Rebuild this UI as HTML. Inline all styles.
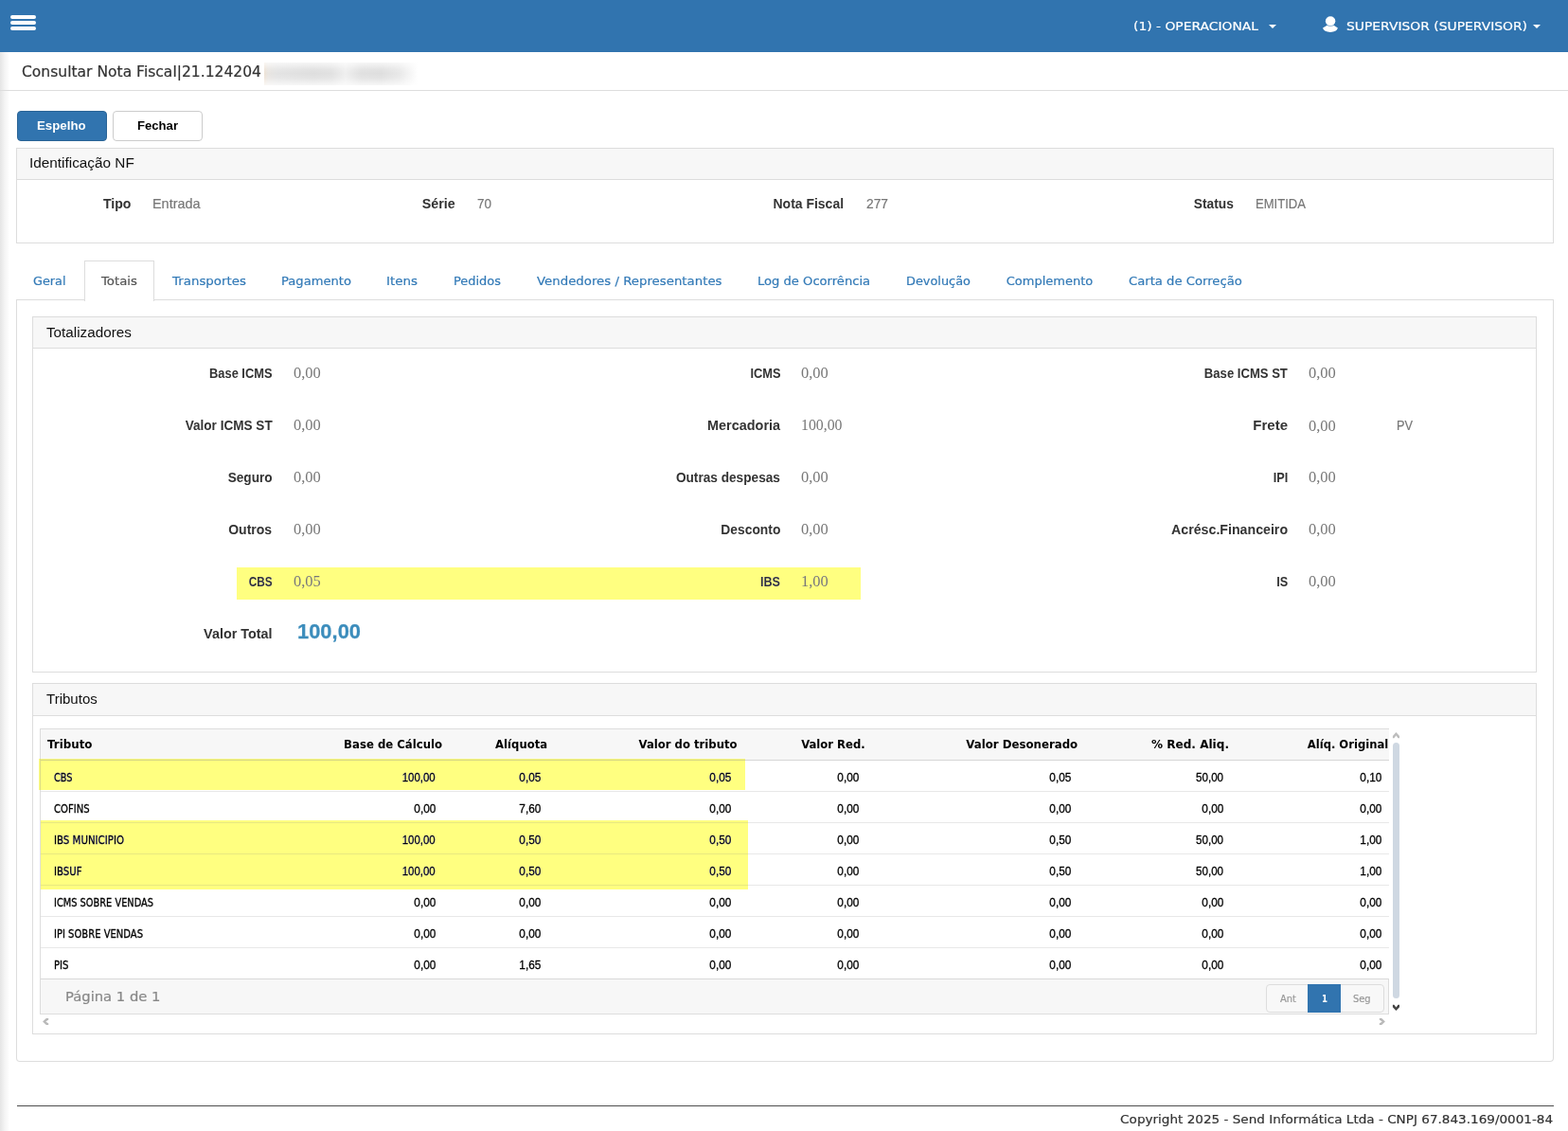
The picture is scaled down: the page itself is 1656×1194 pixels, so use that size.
<!DOCTYPE html>
<html lang="pt-BR">
<head>
<meta charset="utf-8">
<title>Consultar Nota Fiscal</title>
<style>
*{box-sizing:border-box}
html,body{margin:0;padding:0}
body{width:1656px;height:1194px;position:relative;overflow:hidden;background:#fff;color:#333;font:13px/20px 'DejaVu Sans',Verdana,sans-serif}
ul,li,h1,h2,p,hr,label,mark,button{margin:0;padding:0;border:0;list-style:none;background:none;font:inherit;color:inherit}
a{text-decoration:none}
/* positioned text: every label is placed by its baseline; scaleX matches the reference glyph widths */
.t{position:absolute;white-space:pre;transform-origin:0 50%}
.t.r{transform-origin:100% 50%}
.f-nav{font:normal 13px/20px 'DejaVu Sans', Verdana, sans-serif}
.f-title{font:normal 15px/20px 'DejaVu Sans', Verdana, sans-serif}
.f-tab{font:normal 13px/20px 'DejaVu Sans', Verdana, sans-serif}
.f-foot{font:normal 13px/20px 'DejaVu Sans', Verdana, sans-serif}
.f-pg{font:normal 14px/20px 'DejaVu Sans', Verdana, sans-serif}
.f-pag{font:normal 9.7px/20px 'DejaVu Sans', Verdana, sans-serif}
.f-pagb{font:bold 9.7px/20px 'DejaVu Sans', Verdana, sans-serif}
.f-th{font:bold 12.5px/20px 'DejaVu Sans', Verdana, sans-serif}
.f-ph{font:normal 15.5px/20px 'Liberation Sans', Arial, sans-serif}
.f-btn{font:bold 13px/20px 'Liberation Sans', Arial, sans-serif}
.f-lbl{font:bold 15px/20px 'Liberation Sans', Arial, sans-serif}
.f-val{font:normal 15px/20px 'Liberation Sans', Arial, sans-serif}
.f-td{font:normal 12px/20px 'Liberation Sans', Arial, sans-serif}
.f-tdn{font:normal 12px/20px 'DejaVu Sans Condensed', 'DejaVu Sans', 'Trebuchet MS', sans-serif}
.f-ser{font:normal 16px/20px 'Liberation Serif', 'Times New Roman', serif}
.f-tot{font:bold 22px/20px 'Liberation Sans', Arial, sans-serif}
.f-td,.f-tdn{-webkit-text-stroke:.3px currentColor}
.f-tot{-webkit-text-stroke:.25px currentColor}
.f-tab,.f-nav,.f-title,.f-foot,.f-pg,.f-pag,.f-val{-webkit-text-stroke:.2px currentColor}
/* navbar */
.navbar{position:absolute;background:#3174af}
.menu-toggle{position:absolute;display:block;cursor:pointer}
.menu-toggle .bar{position:absolute;display:block;background:#fff;border-radius:2.2px}
.caret{position:absolute;width:0!important;height:0!important;border-left:4px solid transparent;border-right:4px solid transparent;border-top:4px solid #fff}
.user-icon{position:absolute}
.side-shadow{position:absolute;background:linear-gradient(to right,#e5e5e5 0,#f4f4f4 5px,#fff 10px)}
/* header */
.rule{position:absolute;background:#ddd}
.rule.dark{background:#4d4d4d}
.redacted{position:absolute;background:
 linear-gradient(to bottom,rgba(255,255,255,.72) 0,rgba(255,255,255,.15) 30%,rgba(255,255,255,0) 48%,rgba(255,255,255,.15) 68%,rgba(255,255,255,.75) 100%),
 linear-gradient(to right,#eee2d5 0,#e8e5e1 4px,#e3e3e3 14px,#dedede 32%,#e1e1e1 44%,#efefef 53%,#e0e0e0 63%,#dedede 76%,#e8e8e8 88%,#f7f7f7 96%,#fff 100%)}
.btn{position:absolute;display:block;border:1px solid #ccc;border-radius:4px;background:#fff;cursor:pointer}
.btn-primary{background:#3174af;border-color:#2a6496}
/* panels */
.panel{position:absolute;border:1px solid #ddd;background:#fff}
.panel-heading{display:block;background:#f7f7f7;border-bottom:1px solid #ddd}
/* tabs */
.nav-tabs{position:absolute;border-bottom:1px solid #ddd}
.nav-tabs .active{position:absolute;border:1px solid #ddd;border-bottom:0;background:#fff}
.tab-content{position:absolute;border:1px solid #ddd;border-top:0;border-radius:0 0 4px 4px}
/* annotation highlights */
.hl{position:absolute;display:block;background:#ffff80;mix-blend-mode:darken}
/* data grid */
.grid{position:absolute;border:1px solid #ddd;border-right:0;overflow:hidden;background:#fff}
.table{position:absolute;left:0;top:0;width:1431px;table-layout:fixed;border-collapse:separate;border-spacing:0}
.table th{height:33px;padding:6px 8px;background:#f7f7f7;border-bottom:1px solid #d6d6d6;text-align:right;vertical-align:top;color:#000;white-space:nowrap;font:bold 12.5px/20px 'DejaVu Sans', Verdana, sans-serif}
.table th:first-child{text-align:left;padding-left:6.8px}
.table th:nth-child(3){padding-right:7.5px}
.table th:nth-child(4){padding-right:8.5px}
.table td{height:33px;padding:8px 14.3px 4px;border-bottom:1px solid #e8e8e8;text-align:right;vertical-align:top;color:#000;white-space:nowrap;font:normal 12px/20px 'Liberation Sans', Arial, sans-serif;-webkit-text-stroke:.3px currentColor}
.table td:first-child{text-align:left;padding-left:13.7px;font-family:'DejaVu Sans Condensed', 'DejaVu Sans', 'Trebuchet MS', sans-serif}
.table td:nth-child(2){padding-right:15px}
.table td:nth-child(4){padding-right:15px}
.table td:nth-child(6){padding-right:14.5px}
.table td:nth-child(7){padding-right:14px}
.table tr:last-child td{border-bottom:0}
.sx{display:inline-block;transform-origin:100% 50%}
.sx.l{transform-origin:0 50%}
.grid-footer{position:absolute;background:#f7f7f7;border-top:1px solid #d9d9d9;border-right:1px solid #ddd}
.pagination{position:absolute;border:1px solid #ddd;border-radius:4px;background:#f8f8f8}
.pagination .active{position:absolute;background:#3174af}
.scroll-thumb{position:absolute;border-radius:3.5px;background:#cfd8e2}
.chevrons{position:absolute;overflow:visible}
</style>
</head>
<body>
<nav class="navbar" style="left:0px;top:0px;width:1656px;height:55px;">
  <button class="menu-toggle" style="left:11px;top:15px;width:27px;height:18px;" type="button" aria-label="Menu">
    <span class="bar" style="left:0px;top:0.5px;width:27px;height:4.4px;"></span>
    <span class="bar" style="left:0px;top:6.8px;width:27px;height:4.4px;"></span>
    <span class="bar" style="left:0px;top:13.1px;width:27px;height:4.4px;"></span>
  </button>
  <ul class="nav-right">
    <li class="dropdown">
      <a class="t f-nav" style="left:1197px;top:18px;color:#fff;transform:scaleX(1.0659)">(1) - OPERACIONAL</a>
      <b class="caret" style="left:1340px;top:26px;width:0px;height:0px;"></b>
    </li>
    <li class="dropdown">
      <svg class="user-icon" style="left:1390px;top:10px" width="36" height="30" viewBox="0 0 36 30" aria-hidden="true"><ellipse cx="15.1" cy="12.2" rx="5.2" ry="4.9" fill="#fff"/><rect x="11.4" y="16.3" width="7.4" height="1.6" fill="#fff" opacity=".55"/><path d="M7 19.6 L11.2 16.9 Q15.1 18.9 19 16.9 L22.9 19.6 Q21.6 23.9 15 23.9 Q8.4 23.9 7 19.6 Z" fill="#fff"/></svg>
      <a class="t f-nav" style="left:1421.6px;top:18px;color:#fff;transform:scaleX(1.0667)">SUPERVISOR (SUPERVISOR)</a>
      <b class="caret" style="left:1619px;top:26px;width:0px;height:0px;"></b>
    </li>
  </ul>
</nav>
<aside class="side-shadow" style="left:0px;top:55px;width:10px;height:1139px;" aria-hidden="true"></aside>
<main class="content">
  <header class="page-header">
    <h1 class="t f-title" style="left:23px;top:66px;color:#333;transform:scaleX(1.0360)">Consultar Nota Fiscal|21.124204</h1>
    <span class="redacted" style="left:279px;top:66px;width:162px;height:24px;" aria-hidden="true"></span>
    <hr class="rule" style="left:0px;top:95px;width:1656px;height:1px;">
  </header>
  <div class="toolbar">
    <button class="btn btn-primary" style="left:18px;top:117px;width:95px;height:32px;" type="button">
      <span class="t f-btn" style="left:20.2px;top:5px;color:#fff;transform:scaleX(1.0202)">Espelho</span>
    </button>
    <button class="btn btn-default" style="left:119px;top:117px;width:95px;height:32px;" type="button">
      <span class="t f-btn" style="left:25px;top:5px;color:#000;transform:scaleX(1.0084)">Fechar</span>
    </button>
  </div>
  <section class="panel" style="left:17px;top:156px;width:1624px;height:101px;">
    <h2 class="panel-heading" style="height:33px">
      <span class="t f-ph" style="left:13.2px;top:5px;color:#111;transform:scaleX(0.9893)">Identificação NF</span>
    </h2>
    <div class="panel-body">
      <div class="field">
        <label class="t f-lbl r" style="right:1501.5px;top:48px;color:#333;transform:scaleX(0.9398)">Tipo</label>
        <span class="t f-val" style="left:143.4px;top:48px;color:#777;transform:scaleX(0.9610)">Entrada</span>
      </div>
      <div class="field">
        <label class="t f-lbl r" style="right:1159px;top:48px;color:#333;transform:scaleX(0.9536)">Série</label>
        <span class="t f-val" style="left:486px;top:48px;color:#777;transform:scaleX(0.8989)">70</span>
      </div>
      <div class="field">
        <label class="t f-lbl r" style="right:748.5px;top:48px;color:#333;transform:scaleX(0.9309)">Nota Fiscal</label>
        <span class="t f-val" style="left:897px;top:48px;color:#777;transform:scaleX(0.9189)">277</span>
      </div>
      <div class="field">
        <label class="t f-lbl r" style="right:337.5px;top:48px;color:#333;transform:scaleX(0.9162)">Status</label>
        <span class="t f-val" style="left:1308px;top:48px;color:#777;transform:scaleX(0.8711)">EMITIDA</span>
      </div>
    </div>
  </section>
  <ul class="nav-tabs" style="left:17px;top:275px;width:1624px;height:42px;">
    <li>
      <a class="t f-tab" style="left:17.75px;top:12px;color:#337ab7;transform:scaleX(0.9857)">Geral</a>
    </li>
    <li class="active" style="left:72px;top:0px;width:74px;height:43px;">
      <a class="t f-tab" style="left:17px;top:11px;color:#555;transform:scaleX(1.0231)">Totais</a>
    </li>
    <li>
      <a class="t f-tab" style="left:165px;top:12px;color:#337ab7;transform:scaleX(1.0293)">Transportes</a>
    </li>
    <li>
      <a class="t f-tab" style="left:280px;top:12px;color:#337ab7;transform:scaleX(1.0081)">Pagamento</a>
    </li>
    <li>
      <a class="t f-tab" style="left:391.25px;top:12px;color:#337ab7;transform:scaleX(1.0328)">Itens</a>
    </li>
    <li>
      <a class="t f-tab" style="left:462.25px;top:12px;color:#337ab7;transform:scaleX(0.9956)">Pedidos</a>
    </li>
    <li>
      <a class="t f-tab" style="left:549.75px;top:12px;color:#337ab7;transform:scaleX(1.0236)">Vendedores / Representantes</a>
    </li>
    <li>
      <a class="t f-tab" style="left:782.7px;top:12px;color:#337ab7;transform:scaleX(1.0075)">Log de Ocorrência</a>
    </li>
    <li>
      <a class="t f-tab" style="left:940px;top:12px;color:#337ab7;transform:scaleX(0.9901)">Devolução</a>
    </li>
    <li>
      <a class="t f-tab" style="left:1045.7px;top:12px;color:#337ab7">Complemento</a>
    </li>
    <li>
      <a class="t f-tab" style="left:1174.8px;top:12px;color:#337ab7;transform:scaleX(1.0131)">Carta de Correção</a>
    </li>
  </ul>
  <div class="tab-content" style="left:17px;top:317px;width:1624px;height:804px;">
    <section class="panel" style="left:16px;top:17px;width:1589px;height:376px;">
      <h2 class="panel-heading" style="height:33px">
        <span class="t f-ph" style="left:14px;top:6px;color:#111;transform:scaleX(0.9833)">Totalizadores</span>
      </h2>
      <div class="panel-body">
        <div class="form-row">
          <div class="field">
            <label class="t f-lbl r" style="right:1334.4px;top:49px;color:#333;transform:scaleX(0.8577)">Base ICMS</label>
            <span class="t f-ser form-value" style="left:274.5px;top:49px;color:#777;transform:scaleX(1.0286)">0,00</span>
          </div>
          <div class="field">
            <label class="t f-lbl r" style="right:798px;top:49px;color:#333;transform:scaleX(0.8533)">ICMS</label>
            <span class="t f-ser form-value" style="left:811px;top:49px;color:#777;transform:scaleX(1.0286)">0,00</span>
          </div>
          <div class="field">
            <label class="t f-lbl r" style="right:262px;top:49px;color:#333;transform:scaleX(0.8724)">Base ICMS ST</label>
            <span class="t f-ser form-value" style="left:1347.3px;top:49px;color:#777;transform:scaleX(1.0286)">0,00</span>
          </div>
        </div>
        <div class="form-row">
          <div class="field">
            <label class="t f-lbl r" style="right:1334.4px;top:104px;color:#333;transform:scaleX(0.9046)">Valor ICMS ST</label>
            <span class="t f-ser form-value" style="left:274.5px;top:104px;color:#777;transform:scaleX(1.0286)">0,00</span>
          </div>
          <div class="field">
            <label class="t f-lbl r" style="right:798px;top:104px;color:#333;transform:scaleX(0.9619)">Mercadoria</label>
            <span class="t f-ser form-value" style="left:811px;top:104px;color:#777;transform:scaleX(0.9886)">100,00</span>
          </div>
          <div class="field">
            <label class="t f-lbl r" style="right:262px;top:104px;color:#333">Frete</label>
            <span class="t f-ser form-value" style="left:1347.3px;top:105px;color:#777;transform:scaleX(1.0286)">0,00</span>
            <span class="t f-val" style="left:1440px;top:104px;color:#777;transform:scaleX(0.8493)">PV</span>
          </div>
        </div>
        <div class="form-row">
          <div class="field">
            <label class="t f-lbl r" style="right:1334.4px;top:159px;color:#333;transform:scaleX(0.9093)">Seguro</label>
            <span class="t f-ser form-value" style="left:274.5px;top:159px;color:#777;transform:scaleX(1.0286)">0,00</span>
          </div>
          <div class="field">
            <label class="t f-lbl r" style="right:798px;top:159px;color:#333;transform:scaleX(0.9098)">Outras despesas</label>
            <span class="t f-ser form-value" style="left:811px;top:159px;color:#777;transform:scaleX(1.0286)">0,00</span>
          </div>
          <div class="field">
            <label class="t f-lbl r" style="right:262px;top:159px;color:#333;transform:scaleX(0.8450)">IPI</label>
            <span class="t f-ser form-value" style="left:1347.3px;top:159px;color:#777;transform:scaleX(1.0286)">0,00</span>
          </div>
        </div>
        <div class="form-row">
          <div class="field">
            <label class="t f-lbl r" style="right:1334.4px;top:214px;color:#333;transform:scaleX(0.9355)">Outros</label>
            <span class="t f-ser form-value" style="left:274.5px;top:214px;color:#777;transform:scaleX(1.0286)">0,00</span>
          </div>
          <div class="field">
            <label class="t f-lbl r" style="right:798px;top:214px;color:#333;transform:scaleX(0.9218)">Desconto</label>
            <span class="t f-ser form-value" style="left:811px;top:214px;color:#777;transform:scaleX(1.0286)">0,00</span>
          </div>
          <div class="field">
            <label class="t f-lbl r" style="right:262px;top:214px;color:#333;transform:scaleX(0.9457)">Acrésc.Financeiro</label>
            <span class="t f-ser form-value" style="left:1347.3px;top:214px;color:#777;transform:scaleX(1.0286)">0,00</span>
          </div>
        </div>
        <div class="form-row">
          <div class="field">
            <label class="t f-lbl r" style="right:1334.4px;top:269px;color:#333;transform:scaleX(0.7893)">CBS</label>
            <span class="t f-ser form-value" style="left:274.5px;top:269px;color:#777;transform:scaleX(1.0286)">0,05</span>
          </div>
          <div class="field">
            <label class="t f-lbl r" style="right:798px;top:269px;color:#333;transform:scaleX(0.8395)">IBS</label>
            <span class="t f-ser form-value" style="left:811px;top:269px;color:#777;transform:scaleX(1.0286)">1,00</span>
          </div>
          <div class="field">
            <label class="t f-lbl r" style="right:262px;top:269px;color:#333;transform:scaleX(0.8458)">IS</label>
            <span class="t f-ser form-value" style="left:1347.3px;top:269px;color:#777;transform:scaleX(1.0286)">0,00</span>
          </div>
        </div>
        <div class="form-row">
          <div class="field">
            <label class="t f-lbl r" style="right:1334.4px;top:324px;color:#333;transform:scaleX(0.9593)">Valor Total</label>
            <strong class="t f-tot" style="left:279px;top:322px;color:#3c8dbc;transform:scaleX(0.9956)">100,00</strong>
          </div>
        </div>
      </div>
      <mark class="hl" style="left:215px;top:264px;width:659px;height:34px;" aria-hidden="true"></mark>
    </section>
    <section class="panel" style="left:16px;top:404px;width:1589px;height:371px;">
      <h2 class="panel-heading" style="height:34px">
        <span class="t f-ph" style="left:14.2px;top:6px;color:#111;transform:scaleX(0.9707)">Tributos</span>
      </h2>
      <div class="panel-body">
        <div class="grid" style="left:7px;top:47px;width:1425px;height:302px;">
          <table class="table">
            <colgroup><col style="width:300px"><col style="width:132px"><col style="width:111px"><col style="width:201px"><col style="width:135px"><col style="width:224px"><col style="width:160px"><col style="width:168px"></colgroup>
            <thead>
              <tr>
                <th scope="col"><span class="sx l" style="transform:scaleX(0.9497)">Tributo</span></th>
                <th scope="col"><span class="sx" style="transform:scaleX(0.9361)">Base de Cálculo</span></th>
                <th scope="col"><span class="sx" style="transform:scaleX(0.9307)">Alíquota</span></th>
                <th scope="col"><span class="sx" style="transform:scaleX(0.9323)">Valor do tributo</span></th>
                <th scope="col"><span class="sx" style="transform:scaleX(0.9294)">Valor Red.</span></th>
                <th scope="col"><span class="sx" style="transform:scaleX(0.9424)">Valor Desonerado</span></th>
                <th scope="col"><span class="sx" style="transform:scaleX(0.9651)">% Red. Aliq.</span></th>
                <th scope="col"><span class="sx" style="transform:scaleX(0.9271)">Alíq. Original</span></th>
              </tr>
            </thead>
            <tbody>
              <tr><td><span class="sx l" style="transform:scaleX(0.9030)">CBS</span></td><td><span class="sx" style="transform:scaleX(0.9536)">100,00</span></td><td><span class="sx" style="transform:scaleX(0.9846)">0,05</span></td><td><span class="sx" style="transform:scaleX(0.9846)">0,05</span></td><td><span class="sx" style="transform:scaleX(0.9846)">0,00</span></td><td><span class="sx" style="transform:scaleX(0.9846)">0,05</span></td><td><span class="sx" style="transform:scaleX(0.9657)">50,00</span></td><td><span class="sx" style="transform:scaleX(0.9846)">0,10</span></td></tr>
              <tr><td><span class="sx l" style="transform:scaleX(0.9292)">COFINS</span></td><td><span class="sx" style="transform:scaleX(0.9846)">0,00</span></td><td><span class="sx" style="transform:scaleX(0.9846)">7,60</span></td><td><span class="sx" style="transform:scaleX(0.9846)">0,00</span></td><td><span class="sx" style="transform:scaleX(0.9846)">0,00</span></td><td><span class="sx" style="transform:scaleX(0.9846)">0,00</span></td><td><span class="sx" style="transform:scaleX(0.9846)">0,00</span></td><td><span class="sx" style="transform:scaleX(0.9846)">0,00</span></td></tr>
              <tr><td><span class="sx l" style="transform:scaleX(0.9481)">IBS MUNICIPIO</span></td><td><span class="sx" style="transform:scaleX(0.9536)">100,00</span></td><td><span class="sx" style="transform:scaleX(0.9846)">0,50</span></td><td><span class="sx" style="transform:scaleX(0.9846)">0,50</span></td><td><span class="sx" style="transform:scaleX(0.9846)">0,00</span></td><td><span class="sx" style="transform:scaleX(0.9846)">0,50</span></td><td><span class="sx" style="transform:scaleX(0.9657)">50,00</span></td><td><span class="sx" style="transform:scaleX(0.9846)">1,00</span></td></tr>
              <tr><td><span class="sx l" style="transform:scaleX(0.9407)">IBSUF</span></td><td><span class="sx" style="transform:scaleX(0.9536)">100,00</span></td><td><span class="sx" style="transform:scaleX(0.9846)">0,50</span></td><td><span class="sx" style="transform:scaleX(0.9846)">0,50</span></td><td><span class="sx" style="transform:scaleX(0.9846)">0,00</span></td><td><span class="sx" style="transform:scaleX(0.9846)">0,50</span></td><td><span class="sx" style="transform:scaleX(0.9657)">50,00</span></td><td><span class="sx" style="transform:scaleX(0.9846)">1,00</span></td></tr>
              <tr><td><span class="sx l" style="transform:scaleX(0.9095)">ICMS SOBRE VENDAS</span></td><td><span class="sx" style="transform:scaleX(0.9846)">0,00</span></td><td><span class="sx" style="transform:scaleX(0.9846)">0,00</span></td><td><span class="sx" style="transform:scaleX(0.9846)">0,00</span></td><td><span class="sx" style="transform:scaleX(0.9846)">0,00</span></td><td><span class="sx" style="transform:scaleX(0.9846)">0,00</span></td><td><span class="sx" style="transform:scaleX(0.9846)">0,00</span></td><td><span class="sx" style="transform:scaleX(0.9846)">0,00</span></td></tr>
              <tr><td><span class="sx l" style="transform:scaleX(0.9267)">IPI SOBRE VENDAS</span></td><td><span class="sx" style="transform:scaleX(0.9846)">0,00</span></td><td><span class="sx" style="transform:scaleX(0.9846)">0,00</span></td><td><span class="sx" style="transform:scaleX(0.9846)">0,00</span></td><td><span class="sx" style="transform:scaleX(0.9846)">0,00</span></td><td><span class="sx" style="transform:scaleX(0.9846)">0,00</span></td><td><span class="sx" style="transform:scaleX(0.9846)">0,00</span></td><td><span class="sx" style="transform:scaleX(0.9846)">0,00</span></td></tr>
              <tr><td><span class="sx l" style="transform:scaleX(0.9367)">PIS</span></td><td><span class="sx" style="transform:scaleX(0.9846)">0,00</span></td><td><span class="sx" style="transform:scaleX(0.9846)">1,65</span></td><td><span class="sx" style="transform:scaleX(0.9846)">0,00</span></td><td><span class="sx" style="transform:scaleX(0.9846)">0,00</span></td><td><span class="sx" style="transform:scaleX(0.9846)">0,00</span></td><td><span class="sx" style="transform:scaleX(0.9846)">0,00</span></td><td><span class="sx" style="transform:scaleX(0.9846)">0,00</span></td></tr>
            </tbody>
          </table>
          <div class="grid-footer" style="left:0px;top:263px;width:1424px;height:37px;">
            <span class="t f-pg" style="left:25.5px;top:8px;color:#888;transform:scaleX(1.0546)">Página 1 de 1</span>
            <ul class="pagination" style="left:1294px;top:5px;width:125px;height:30px;">
              <li class="disabled">
                <a class="t f-pag" style="left:13.5px;top:5px;color:#999;transform:scaleX(1.0254)">Ant</a>
              </li>
              <li class="active" style="left:43px;top:-1px;width:35px;height:30px;">
                <a class="t f-pagb" style="left:14.5px;top:6px;color:#fff;transform:scaleX(0.8889)">1</a>
              </li>
              <li class="disabled">
                <a class="t f-pag" style="left:91.2px;top:5px;color:#999;transform:scaleX(1.0183)">Seg</a>
              </li>
            </ul>
          </div>
        </div>
        <div class="scrollbars" aria-hidden="true">
          <span class="scroll-thumb" style="left:1436px;top:62px;width:7px;height:270px;"></span>
          <svg class="chevrons" style="left:-35px;top:-722px" width="1656" height="1194" viewBox="0 0 1656 1194"><polygon fill="#bdbdbd" points="1474.45,773.1 1478,776.9 1478,779.3 1476.5,779.3 1474.45,776.4 1472.4,779.3 1470.9,779.3 1470.9,776.9"/><polygon fill="#444" points="1470.9,1060.7 1472.4,1060.7 1474.45,1063.6 1476.5,1060.7 1478,1060.7 1478,1063.2 1474.45,1067 1470.9,1063.2"/><polygon fill="#b8b8b8" points="1456.8,1075 1459.2,1075 1462.9,1078.5 1459.2,1082 1456.8,1082 1456.8,1080.5 1459.7,1078.5 1456.8,1076.5"/><polygon fill="#b8b8b8" points="51.2,1075 48.8,1075 45.1,1078.5 48.8,1082 51.2,1082 51.2,1080.5 48.3,1078.5 51.2,1076.5"/></svg>
        </div>
      </div>
      <mark class="hl" style="left:6px;top:79px;width:746px;height:33px;" aria-hidden="true"></mark>
      <mark class="hl" style="left:8px;top:144px;width:747px;height:73px;" aria-hidden="true"></mark>
    </section>
  </div>
</main>
<footer class="page-footer">
  <hr class="rule dark" style="left:18px;top:1167px;width:1623px;height:1px;">
  <p class="t f-foot r" style="right:16px;top:1172px;color:#333;transform:scaleX(1.0431)">Copyright 2025 - Send Informática Ltda - CNPJ 67.843.169/0001-84</p>
</footer>
</body>
</html>
